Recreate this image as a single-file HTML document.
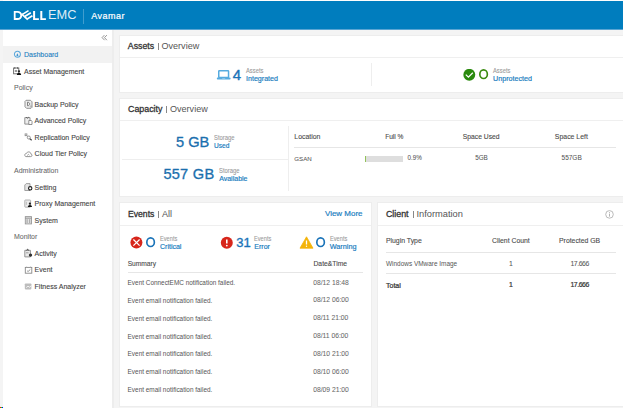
<!DOCTYPE html>
<html><head><meta charset="utf-8"><style>
html,body{margin:0;padding:0;}
body{width:623px;height:408px;overflow:hidden;position:relative;background:#f4f4f4;font-family:"Liberation Sans", sans-serif;}
body div{white-space:nowrap;}
</style></head><body>
<div style="position:absolute;left:3px;top:0px;width:620px;height:1px;background:#fdfdfd"></div>
<div style="position:absolute;left:0px;top:1px;width:623px;height:28px;background:#007dbe"></div>
<div style="position:absolute;left:0px;top:29px;width:623px;height:1px;background:#5aa5d3"></div>
<div style="position:absolute;left:0px;top:30px;width:3px;height:378px;background:#f4f4f4"></div>
<div style="position:absolute;left:3px;top:30px;width:109px;height:378px;background:#fff"></div>
<div style="position:absolute;left:112px;top:30px;width:2px;height:378px;background:#ededed"></div>
<div style="position:absolute;left:3px;top:46px;width:109px;height:17px;background:#f2f2f2"></div>
<svg style="position:absolute;left:0;top:0" width="80" height="30" viewBox="0 0 80 30">
<path fill="#fff" fill-rule="evenodd" d="M13.8 10.9h3.5c3 0 4.9 1.8 4.9 4.5s-1.9 4.5-4.9 4.5H13.8z M15.6 12.7v5.4h1.7c1.9 0 3-1.1 3-2.7s-1.1-2.7-3-2.7z"/>
<g stroke="#fff" stroke-width="1.7" fill="none" stroke-linecap="butt">
<path d="M21.4 13.9 L27.8 19.7"/>
<path d="M22.0 14.6 L28.5 10.6"/>
<path d="M24.7 16.4 L30.8 12.7"/>
<path d="M27.3 18.9 L32.4 15.7"/>
</g>
<path fill="#fff" d="M33.1 10.9h2v7.4h3.8v1.7h-5.8z M40.3 10.9h2v7.4h3.6v1.7h-5.6z"/>
</svg>
<div style="position:absolute;left:48px;top:9.45px;font-size:12.8px;line-height:12.8px;font-weight:400;color:rgba(255,255,255,0.88);letter-spacing:0px;">EMC</div>
<div style="position:absolute;left:83px;top:9px;width:1px;height:15px;background:rgba(255,255,255,0.25)"></div>
<div style="position:absolute;left:91.2px;top:11.96px;font-size:9px;line-height:9px;font-weight:400;color:#fff;letter-spacing:0.5px;-webkit-text-stroke:0.2px #fff;">Avamar</div>
<svg style="position:absolute;left:0;top:0" width="623" height="60" viewBox="0 0 623 60"><path d="M104.4 35.1 L102.1 37.6 L104.6 40.2 M106.9 35.1 L104.5 37.6 L106.9 40.2" fill="none" stroke="#8a8a8a" stroke-width="0.9"/></svg>
<div style="position:absolute;left:24px;top:51.18px;font-size:7px;line-height:7px;font-weight:400;color:#1a7dc0;letter-spacing:0px;-webkit-text-stroke:0.1px #1a7dc0;">Dashboard</div>
<svg style="position:absolute;left:12px;top:49px" width="11" height="11" viewBox="0 0 11 11"><g transform="translate(1.40 1.25)"><circle cx="4" cy="4" r="3" fill="none" stroke="#5aa8dc" stroke-width="1.05"/><path d="M4 3.1L4.85 4.7A0.9 0.9 0 1 1 3.15 4.7z" fill="#3d93d0"/></g></svg>
<div style="position:absolute;left:24px;top:67.73px;font-size:7px;line-height:7px;font-weight:400;color:#444;letter-spacing:0px;-webkit-text-stroke:0.1px #444;">Asset Management</div>
<svg style="position:absolute;left:12px;top:66px" width="11" height="11" viewBox="0 0 11 11"><g transform="translate(1.00 1.00)"><rect x="0.6" y="1" width="5.2" height="5.8" fill="none" stroke="#666" stroke-width="0.9"/><path d="M1.8 0.3v1.4M4.6 0.3v1.4" stroke="#333" stroke-width="0.8"/><path d="M1.8 4h2.4" stroke="#333" stroke-width="1"/><circle cx="6" cy="4.3" r="1.1" fill="#222"/><path d="M3.9 7.9c0-1.4 1-2.2 2.1-2.2s2.1 .8 2.1 2.2z" fill="#111"/></g></svg>
<div style="position:absolute;left:14px;top:84.28px;font-size:7px;line-height:7px;font-weight:400;color:#666;letter-spacing:0px;-webkit-text-stroke:0.05px #666;">Policy</div>
<div style="position:absolute;left:34.6px;top:100.83px;font-size:7px;line-height:7px;font-weight:400;color:#444;letter-spacing:0px;-webkit-text-stroke:0.1px #444;">Backup Policy</div>
<svg style="position:absolute;left:23px;top:98px" width="11" height="11" viewBox="0 0 11 11"><g transform="translate(1.50 1.80)"><path d="M1.5 0.5h4.5l1.5 1.5v5.5l-1 1h-4.5l-1.5-1.5v-5.5z" fill="#eee" stroke="#888" stroke-width="0.9"/><path d="M3 2.4v3.6c1.3 0 2.2-.7 2.2-1.8s-.9-1.8-2.2-1.8z" fill="none" stroke="#666" stroke-width="0.8"/><circle cx="6.4" cy="6.6" r="0.7" fill="#fff" stroke="#777" stroke-width="0.5"/></g></svg>
<div style="position:absolute;left:34.6px;top:117.38px;font-size:7px;line-height:7px;font-weight:400;color:#444;letter-spacing:0px;-webkit-text-stroke:0.1px #444;">Advanced Policy</div>
<svg style="position:absolute;left:23px;top:115px" width="11" height="11" viewBox="0 0 11 11"><g transform="translate(1.00 1.30)"><path d="M0.8 1.3h5.2v6.5h-5.2z" fill="#eee" stroke="#888" stroke-width="0.9"/><path d="M2 0.8l1.4 1.2 1.4-1.2" fill="none" stroke="#555" stroke-width="0.8"/><path d="M4.8 4.2h2.6l0.6 0.8v3.2h-3.2z" fill="#fff" stroke="#777" stroke-width="0.8"/></g></svg>
<div style="position:absolute;left:34.6px;top:133.93px;font-size:7px;line-height:7px;font-weight:400;color:#444;letter-spacing:0px;-webkit-text-stroke:0.1px #444;">Replication Policy</div>
<svg style="position:absolute;left:23px;top:132px" width="11" height="11" viewBox="0 0 11 11"><g transform="translate(1.50 1.30)"><rect x="0.6" y="0.6" width="1.8" height="1.8" fill="none" stroke="#888" stroke-width="0.8"/><path d="M2.2 2.2l1.2 1.2" stroke="#999" stroke-width="0.8"/><circle cx="4.3" cy="4.2" r="1.5" fill="none" stroke="#888" stroke-width="0.9"/><path d="M5.3 5.4l1.9 1.6" stroke="#444" stroke-width="1.2"/></g></svg>
<div style="position:absolute;left:34.6px;top:150.48px;font-size:7px;line-height:7px;font-weight:400;color:#444;letter-spacing:0px;-webkit-text-stroke:0.1px #444;">Cloud Tier Policy</div>
<svg style="position:absolute;left:23px;top:149px" width="11" height="11" viewBox="0 0 11 11"><g transform="translate(1.00 1.30)"><path d="M1.8 6.3h4.9c.9 0 1.3-.6 1.3-1.3s-.5-1.2-1.1-1.2c0-1.3-1-2.2-2.3-2.2-1 0-1.8.6-2.1 1.5-.9 0-1.7.6-1.7 1.6s.6 1.6 1 1.6z" fill="none" stroke="#888" stroke-width="0.9"/><path d="M3.2 5.2l1.2-1.1 1 .8" fill="none" stroke="#777" stroke-width="0.7"/></g></svg>
<div style="position:absolute;left:14px;top:167.03px;font-size:7px;line-height:7px;font-weight:400;color:#666;letter-spacing:0px;-webkit-text-stroke:0.05px #666;">Administration</div>
<div style="position:absolute;left:34.6px;top:183.58px;font-size:7px;line-height:7px;font-weight:400;color:#444;letter-spacing:0px;-webkit-text-stroke:0.1px #444;">Setting</div>
<svg style="position:absolute;left:23px;top:182px" width="11" height="11" viewBox="0 0 11 11"><g transform="translate(1.20 1.00)"><path d="M2 0.6h3.8v6.9h-5.2v-5.5z" fill="#e6e6e6" stroke="#999" stroke-width="0.9"/><circle cx="6" cy="5.3" r="1.7" fill="#fff" stroke="#222" stroke-width="1.1"/></g></svg>
<div style="position:absolute;left:34.6px;top:200.13px;font-size:7px;line-height:7px;font-weight:400;color:#444;letter-spacing:0px;-webkit-text-stroke:0.1px #444;">Proxy Management</div>
<svg style="position:absolute;left:23px;top:198px" width="11" height="11" viewBox="0 0 11 11"><g transform="translate(1.20 1.30)"><rect x="0.6" y="0.7" width="5.8" height="7.2" rx="0.6" fill="#ececec" stroke="#aaa" stroke-width="0.9"/><path d="M2.2 2.5v3" stroke="#aaa" stroke-width="0.7"/><circle cx="5.7" cy="4.4" r="1.1" fill="#222"/><path d="M3.6 7.8c0-1.4 1-2.2 2.1-2.2s2.1 .8 2.1 2.2z" fill="#111"/></g></svg>
<div style="position:absolute;left:34.6px;top:216.68px;font-size:7px;line-height:7px;font-weight:400;color:#444;letter-spacing:0px;-webkit-text-stroke:0.1px #444;">System</div>
<svg style="position:absolute;left:23px;top:215px" width="11" height="11" viewBox="0 0 11 11"><g transform="translate(1.50 1.00)"><rect x="0.8" y="0.6" width="6.2" height="7.3" fill="#e3e3e3" stroke="#999" stroke-width="0.9"/><path d="M0.8 2.2h6.2" stroke="#888" stroke-width="0.8"/><path d="M2.6 3.2v3.8M5.2 3.2v3.8" stroke="#999" stroke-width="0.9"/></g></svg>
<div style="position:absolute;left:14px;top:233.23px;font-size:7px;line-height:7px;font-weight:400;color:#666;letter-spacing:0px;-webkit-text-stroke:0.05px #666;">Monitor</div>
<div style="position:absolute;left:34.6px;top:249.78px;font-size:7px;line-height:7px;font-weight:400;color:#444;letter-spacing:0px;-webkit-text-stroke:0.1px #444;">Activity</div>
<svg style="position:absolute;left:23px;top:248px" width="11" height="11" viewBox="0 0 11 11"><g transform="translate(1.20 1.00)"><path d="M0.6 1.3h5.6v6.6h-5.6z" fill="#eaeaea" stroke="#888" stroke-width="0.9"/><path d="M2.2 1.3l1.2-1 1.2 1" fill="#444" stroke="#444" stroke-width="0.8"/><path d="M1.8 3.8h2.6" stroke="#888" stroke-width="0.8"/><circle cx="6.3" cy="6.1" r="1.7" fill="#333"/></g></svg>
<div style="position:absolute;left:34.6px;top:266.33px;font-size:7px;line-height:7px;font-weight:400;color:#444;letter-spacing:0px;-webkit-text-stroke:0.1px #444;">Event</div>
<svg style="position:absolute;left:23px;top:265px" width="11" height="11" viewBox="0 0 11 11"><g transform="translate(1.60 1.00)"><rect x="0.7" y="1.4" width="6.5" height="5.8" fill="none" stroke="#888" stroke-width="0.9"/><path d="M2 0.5v1.2M5.9 0.5v1.2" stroke="#aaa" stroke-width="0.7"/><path d="M2.5 4.8l1 .7 2.2-2" fill="none" stroke="#777" stroke-width="0.8"/></g></svg>
<div style="position:absolute;left:34.6px;top:282.88px;font-size:7px;line-height:7px;font-weight:400;color:#444;letter-spacing:0px;-webkit-text-stroke:0.1px #444;">Fitness Analyzer</div>
<svg style="position:absolute;left:23px;top:281px" width="11" height="11" viewBox="0 0 11 11"><g transform="translate(1.40 1.80)"><rect x="0.4" y="0.6" width="6.6" height="6" rx="0.8" fill="#bdbdbd"/><path d="M1.8 4.8l1.8-1.4 1.6 1 1.6-1.4" fill="none" stroke="#fff" stroke-width="0.8"/></g></svg>
<div style="position:absolute;left:119px;top:35px;width:506px;height:58px;background:#fff;border:1px solid #ededed;box-sizing:border-box"></div>
<div style="position:absolute;left:120px;top:57px;width:504px;height:1px;background:#efefef"></div>
<div style="position:absolute;left:127.8px;top:41.59px;font-size:8.8px;line-height:8.8px;font-weight:400;color:#333;letter-spacing:0px;-webkit-text-stroke:0.3px #333;">Assets</div>
<div style="position:absolute;left:157.8px;top:43px;width:0.9px;height:6.5px;background:#888"></div>
<div style="position:absolute;left:161.5px;top:41.55px;font-size:9.05px;line-height:9.05px;font-weight:400;color:#555;letter-spacing:0px;">Overview</div>
<div style="position:absolute;left:119px;top:98px;width:506px;height:99px;background:#fff;border:1px solid #ededed;box-sizing:border-box"></div>
<div style="position:absolute;left:120px;top:120px;width:504px;height:1px;background:#efefef"></div>
<div style="position:absolute;left:128px;top:104.58px;font-size:8.85px;line-height:8.85px;font-weight:400;color:#333;letter-spacing:0px;-webkit-text-stroke:0.3px #333;">Capacity</div>
<div style="position:absolute;left:166.3px;top:106px;width:0.9px;height:6.5px;background:#888"></div>
<div style="position:absolute;left:170px;top:104.55px;font-size:9.05px;line-height:9.05px;font-weight:400;color:#555;letter-spacing:0px;">Overview</div>
<div style="position:absolute;left:119px;top:202px;width:253px;height:205px;background:#fff;border:1px solid #ededed;box-sizing:border-box"></div>
<div style="position:absolute;left:120px;top:225px;width:251px;height:1px;background:#efefef"></div>
<div style="position:absolute;left:128px;top:209.62px;font-size:8.65px;line-height:8.65px;font-weight:400;color:#333;letter-spacing:0px;-webkit-text-stroke:0.3px #333;">Events</div>
<div style="position:absolute;left:158px;top:211px;width:0.9px;height:6.5px;background:#888"></div>
<div style="position:absolute;left:162px;top:209.56px;font-size:9px;line-height:9px;font-weight:400;color:#555;letter-spacing:0px;">All</div>
<div style="position:absolute;left:377px;top:202px;width:248px;height:205px;background:#fff;border:1px solid #ededed;box-sizing:border-box"></div>
<div style="position:absolute;left:378px;top:225px;width:246px;height:1px;background:#efefef"></div>
<div style="position:absolute;left:385.9px;top:209.58px;font-size:8.9px;line-height:8.9px;font-weight:400;color:#333;letter-spacing:0px;-webkit-text-stroke:0.3px #333;">Client</div>
<div style="position:absolute;left:412.5px;top:211px;width:0.9px;height:6.5px;background:#888"></div>
<div style="position:absolute;left:416.4px;top:209.51px;font-size:9.3px;line-height:9.3px;font-weight:400;color:#555;letter-spacing:0px;">Information</div>
<svg style="position:absolute;left:216px;top:69px" width="15" height="12" viewBox="0 0 15 12"><rect x="2.75" y="1.75" width="9.8" height="6.8" rx="0.6" fill="none" stroke="#56abdf" stroke-width="1.5"/><path d="M1.7 8.6h12a0.9 0.9 0 0 1 0 1.8h-12a0.9 0.9 0 0 1 0-1.8z" fill="#56abdf"/><path d="M6.2 9.5h3" stroke="#a9d3ee" stroke-width="0.6"/></svg>
<div style="position:absolute;left:232.8px;top:67.20px;font-size:15px;line-height:15px;font-weight:400;color:#1a73b8;letter-spacing:0px;-webkit-text-stroke:0.4px #1a73b8;">4</div>
<div style="position:absolute;left:246px;top:68.49px;font-size:6.3px;line-height:6.3px;font-weight:400;color:#999;letter-spacing:0px;-webkit-text-stroke:0.08px #999;transform:scaleX(0.92);transform-origin:0 0;">Assets</div>
<div style="position:absolute;left:246px;top:75.66px;font-size:7.1px;line-height:7.1px;font-weight:400;color:#1a7dc0;letter-spacing:0px;-webkit-text-stroke:0.18px #1a7dc0;">Integrated</div>
<div style="position:absolute;left:371px;top:63px;width:1px;height:23px;background:#eee"></div>
<svg style="position:absolute;left:463px;top:69px" width="13" height="13" viewBox="0 0 13 13"><circle cx="6.3" cy="5.8" r="5.95" fill="#2a8a0e"/><path d="M2.8 5.6l2.6 2.5 4.4-4.3" fill="none" stroke="#fff" stroke-width="1.3"/></svg>
<svg style="position:absolute;left:477.95px;top:68.44999999999999px" width="11.2" height="12.3" viewBox="477.95 68.44999999999999 11.2 12.3"><ellipse cx="483.55" cy="74.6" rx="3.7749999999999995" ry="4.325" fill="none" stroke="#3a8a10" stroke-width="1.65"/></svg>
<div style="position:absolute;left:493px;top:68.49px;font-size:6.3px;line-height:6.3px;font-weight:400;color:#999;letter-spacing:0px;-webkit-text-stroke:0.08px #999;transform:scaleX(0.92);transform-origin:0 0;">Assets</div>
<div style="position:absolute;left:493px;top:75.65px;font-size:7.18px;line-height:7.18px;font-weight:400;color:#1a7dc0;letter-spacing:0px;-webkit-text-stroke:0.18px #1a7dc0;">Unprotected</div>
<div style="position:absolute;left:176px;top:134.96px;font-size:14.6px;line-height:14.6px;font-weight:400;color:#1a6fae;letter-spacing:0px;-webkit-text-stroke:0.32px #1a6fae;">5 GB</div>
<div style="position:absolute;left:214px;top:134.69px;font-size:6.3px;line-height:6.3px;font-weight:400;color:#999;letter-spacing:0px;-webkit-text-stroke:0.08px #999;transform:scaleX(0.93);transform-origin:0 0;">Storage</div>
<div style="position:absolute;left:214px;top:143.04px;font-size:6.6px;line-height:6.6px;font-weight:400;color:#1a7dc0;letter-spacing:0px;-webkit-text-stroke:0.18px #1a7dc0;">Used</div>
<div style="position:absolute;left:122px;top:159px;width:166px;height:1px;background:#eee"></div>
<div style="position:absolute;left:163.4px;top:166.96px;font-size:14.6px;line-height:14.6px;font-weight:400;color:#1a6fae;letter-spacing:0.25px;-webkit-text-stroke:0.32px #1a6fae;">557 GB</div>
<div style="position:absolute;left:219.2px;top:167.79px;font-size:6.3px;line-height:6.3px;font-weight:400;color:#999;letter-spacing:0px;-webkit-text-stroke:0.08px #999;transform:scaleX(0.93);transform-origin:0 0;">Storage</div>
<div style="position:absolute;left:219.2px;top:175.48px;font-size:7.0px;line-height:7.0px;font-weight:400;color:#1a7dc0;letter-spacing:0px;-webkit-text-stroke:0.18px #1a7dc0;">Available</div>
<div style="position:absolute;left:288px;top:126px;width:1px;height:65px;background:#eee"></div>
<div style="position:absolute;left:294.3px;top:133.60px;font-size:6.9px;line-height:6.9px;font-weight:400;color:#4a4a4a;letter-spacing:0px;-webkit-text-stroke:0.1px #4a4a4a;">Location</div>
<div style="position:absolute;left:394.3px;top:133.64px;font-size:6.6px;line-height:6.6px;font-weight:400;color:#4a4a4a;letter-spacing:0px;-webkit-text-stroke:0.1px #4a4a4a;transform:translateX(-50%);">Full %</div>
<div style="position:absolute;left:481.2px;top:133.62px;font-size:6.75px;line-height:6.75px;font-weight:400;color:#4a4a4a;letter-spacing:0px;-webkit-text-stroke:0.1px #4a4a4a;transform:translateX(-50%);">Space Used</div>
<div style="position:absolute;left:571.35px;top:133.60px;font-size:6.9px;line-height:6.9px;font-weight:400;color:#4a4a4a;letter-spacing:0px;-webkit-text-stroke:0.1px #4a4a4a;transform:translateX(-50%);">Space Left</div>
<div style="position:absolute;left:294px;top:147px;width:322px;height:1px;background:#e6e6e6"></div>
<div style="position:absolute;left:294.3px;top:155.51px;font-size:6.2px;line-height:6.2px;font-weight:400;color:#555;letter-spacing:0px;-webkit-text-stroke:0.05px #555;">GSAN</div>
<div style="position:absolute;left:364.6px;top:156px;width:38.2px;height:5.8px;background:#dedede"></div>
<div style="position:absolute;left:364.6px;top:156px;width:1.3px;height:5.8px;background:#93c35a"></div>
<div style="position:absolute;left:407.6px;top:155.49px;font-size:6.3px;line-height:6.3px;font-weight:400;color:#555;letter-spacing:0px;-webkit-text-stroke:0.05px #555;">0.9%</div>
<div style="position:absolute;left:481.45px;top:155.49px;font-size:6.3px;line-height:6.3px;font-weight:400;color:#555;letter-spacing:0px;-webkit-text-stroke:0.05px #555;transform:translateX(-50%);">5GB</div>
<div style="position:absolute;left:571.65px;top:155.46px;font-size:6.5px;line-height:6.5px;font-weight:400;color:#555;letter-spacing:0px;-webkit-text-stroke:0.05px #555;transform:translateX(-50%);">557GB</div>
<div style="position:absolute;left:325px;top:209.72px;font-size:7.97px;line-height:7.97px;font-weight:400;color:#1a7dc0;letter-spacing:0px;-webkit-text-stroke:0.18px #1a7dc0;">View More</div>
<svg style="position:absolute;left:130px;top:236px" width="13" height="13" viewBox="0 0 13 13"><circle cx="6.4" cy="6.6" r="6" fill="#d7261b"/><path d="M3.4 3.5l6.2 6.1M9.6 3.5L3.4 9.6" fill="none" stroke="#fff" stroke-width="1.25"/></svg>
<svg style="position:absolute;left:144.95000000000002px;top:235.85px" width="11.2" height="12.3" viewBox="144.95000000000002 235.85 11.2 12.3"><ellipse cx="150.55" cy="242.0" rx="3.7749999999999995" ry="4.325" fill="none" stroke="#1a73b8" stroke-width="1.65"/></svg>
<div style="position:absolute;left:160px;top:236.16px;font-size:6.5px;line-height:6.5px;font-weight:400;color:#999;letter-spacing:0px;-webkit-text-stroke:0.08px #999;transform:scaleX(0.87);transform-origin:0 0;">Events</div>
<div style="position:absolute;left:160px;top:242.88px;font-size:7.0px;line-height:7.0px;font-weight:400;color:#1a7dc0;letter-spacing:0px;-webkit-text-stroke:0.18px #1a7dc0;">Critical</div>
<svg style="position:absolute;left:220px;top:236px" width="13" height="13" viewBox="0 0 13 13"><circle cx="6.8" cy="6.7" r="6" fill="#d7261b"/><path d="M6.8 3.4v4.2" stroke="#fff" stroke-width="1.6"/><circle cx="6.8" cy="9.6" r="0.9" fill="#fff"/></svg>
<div style="position:absolute;left:236.2px;top:235.52px;font-size:13px;line-height:13px;font-weight:400;color:#1a73b8;letter-spacing:0px;-webkit-text-stroke:0.35px #1a73b8;">31</div>
<div style="position:absolute;left:254.3px;top:236.16px;font-size:6.5px;line-height:6.5px;font-weight:400;color:#999;letter-spacing:0px;-webkit-text-stroke:0.08px #999;transform:scaleX(0.87);transform-origin:0 0;">Events</div>
<div style="position:absolute;left:254.3px;top:242.87px;font-size:7.06px;line-height:7.06px;font-weight:400;color:#1a7dc0;letter-spacing:0px;-webkit-text-stroke:0.18px #1a7dc0;">Error</div>
<svg style="position:absolute;left:299px;top:236px" width="15" height="13" viewBox="0 0 15 13"><path d="M7.5 0.8L14 12.2H1z" fill="#f4b40a" stroke="#f4b40a" stroke-width="0.8" stroke-linejoin="round"/><path d="M7.5 4.5v4" stroke="#fff" stroke-width="1.3"/><circle cx="7.5" cy="10.3" r="0.7" fill="#fff"/></svg>
<svg style="position:absolute;left:315.29999999999995px;top:235.85px" width="11.2" height="12.3" viewBox="315.29999999999995 235.85 11.2 12.3"><ellipse cx="320.9" cy="242.0" rx="3.7749999999999995" ry="4.325" fill="none" stroke="#1a73b8" stroke-width="1.65"/></svg>
<div style="position:absolute;left:329.7px;top:236.16px;font-size:6.5px;line-height:6.5px;font-weight:400;color:#999;letter-spacing:0px;-webkit-text-stroke:0.08px #999;transform:scaleX(0.87);transform-origin:0 0;">Events</div>
<div style="position:absolute;left:329.7px;top:242.84px;font-size:7.27px;line-height:7.27px;font-weight:400;color:#1a7dc0;letter-spacing:0px;-webkit-text-stroke:0.18px #1a7dc0;">Warning</div>
<div style="position:absolute;left:127.7px;top:260.54px;font-size:6.65px;line-height:6.65px;font-weight:400;color:#4a4a4a;letter-spacing:0px;-webkit-text-stroke:0.1px #4a4a4a;">Summary</div>
<div style="position:absolute;left:313.5px;top:260.52px;font-size:6.75px;line-height:6.75px;font-weight:400;color:#4a4a4a;letter-spacing:0px;-webkit-text-stroke:0.1px #4a4a4a;">Date&amp;Time</div>
<div style="position:absolute;left:127.7px;top:272px;width:235px;height:1px;background:#e6e6e6"></div>
<div style="position:absolute;left:127.6px;top:279.97px;font-size:6.42px;line-height:6.42px;font-weight:400;color:#555;letter-spacing:0px;">Event ConnectEMC notification failed.</div>
<div style="position:absolute;left:313.2px;top:279.52px;font-size:6.75px;line-height:6.75px;font-weight:400;color:#666;letter-spacing:0px;-webkit-text-stroke:0.04px #666;">08/12 18:48</div>
<div style="position:absolute;left:127.6px;top:297.84px;font-size:6.42px;line-height:6.42px;font-weight:400;color:#555;letter-spacing:0px;">Event email notification failed.</div>
<div style="position:absolute;left:313.2px;top:297.39px;font-size:6.75px;line-height:6.75px;font-weight:400;color:#666;letter-spacing:0px;-webkit-text-stroke:0.04px #666;">08/12 06:00</div>
<div style="position:absolute;left:127.6px;top:315.71px;font-size:6.42px;line-height:6.42px;font-weight:400;color:#555;letter-spacing:0px;">Event email notification failed.</div>
<div style="position:absolute;left:313.2px;top:315.26px;font-size:6.75px;line-height:6.75px;font-weight:400;color:#666;letter-spacing:0px;-webkit-text-stroke:0.04px #666;">08/11 21:00</div>
<div style="position:absolute;left:127.6px;top:333.58px;font-size:6.42px;line-height:6.42px;font-weight:400;color:#555;letter-spacing:0px;">Event email notification failed.</div>
<div style="position:absolute;left:313.2px;top:333.13px;font-size:6.75px;line-height:6.75px;font-weight:400;color:#666;letter-spacing:0px;-webkit-text-stroke:0.04px #666;">08/11 06:00</div>
<div style="position:absolute;left:127.6px;top:351.45px;font-size:6.42px;line-height:6.42px;font-weight:400;color:#555;letter-spacing:0px;">Event email notification failed.</div>
<div style="position:absolute;left:313.2px;top:351.00px;font-size:6.75px;line-height:6.75px;font-weight:400;color:#666;letter-spacing:0px;-webkit-text-stroke:0.04px #666;">08/10 21:00</div>
<div style="position:absolute;left:127.6px;top:369.32px;font-size:6.42px;line-height:6.42px;font-weight:400;color:#555;letter-spacing:0px;">Event email notification failed.</div>
<div style="position:absolute;left:313.2px;top:368.87px;font-size:6.75px;line-height:6.75px;font-weight:400;color:#666;letter-spacing:0px;-webkit-text-stroke:0.04px #666;">08/10 06:00</div>
<div style="position:absolute;left:127.6px;top:387.19px;font-size:6.42px;line-height:6.42px;font-weight:400;color:#555;letter-spacing:0px;">Event email notification failed.</div>
<div style="position:absolute;left:313.2px;top:386.74px;font-size:6.75px;line-height:6.75px;font-weight:400;color:#666;letter-spacing:0px;-webkit-text-stroke:0.04px #666;">08/09 21:00</div>
<svg style="position:absolute;left:605px;top:210px" width="9" height="9" viewBox="0 0 9 9"><circle cx="4.5" cy="4.4" r="3.8" fill="none" stroke="#aaa" stroke-width="0.8"/><path d="M4.5 3.6v3" stroke="#aaa" stroke-width="0.9"/><circle cx="4.5" cy="2.4" r="0.5" fill="#aaa"/></svg>
<div style="position:absolute;left:385.9px;top:237.90px;font-size:6.9px;line-height:6.9px;font-weight:400;color:#4a4a4a;letter-spacing:0px;-webkit-text-stroke:0.1px #4a4a4a;">Plugin Type</div>
<div style="position:absolute;left:510.9px;top:237.90px;font-size:6.85px;line-height:6.85px;font-weight:400;color:#4a4a4a;letter-spacing:0px;-webkit-text-stroke:0.1px #4a4a4a;transform:translateX(-50%);">Client Count</div>
<div style="position:absolute;left:579.6px;top:237.90px;font-size:6.85px;line-height:6.85px;font-weight:400;color:#4a4a4a;letter-spacing:0px;-webkit-text-stroke:0.1px #4a4a4a;transform:translateX(-50%);">Protected GB</div>
<div style="position:absolute;left:386px;top:252px;width:229.5px;height:1px;background:#e6e6e6"></div>
<div style="position:absolute;left:386px;top:260.77px;font-size:6.45px;line-height:6.45px;font-weight:400;color:#555;letter-spacing:0px;">Windows VMware Image</div>
<div style="position:absolute;left:511px;top:260.60px;font-size:6.9px;line-height:6.9px;font-weight:400;color:#555;letter-spacing:0px;-webkit-text-stroke:0.05px #555;transform:translateX(-50%);">1</div>
<div style="position:absolute;left:579.7px;top:260.60px;font-size:6.9px;line-height:6.9px;font-weight:400;color:#555;letter-spacing:-0.45px;-webkit-text-stroke:0.05px #555;transform:translateX(-50%);">17.666</div>
<div style="position:absolute;left:386px;top:273px;width:229.5px;height:1px;background:#e6e6e6"></div>
<div style="position:absolute;left:386px;top:281.68px;font-size:7.0px;line-height:7.0px;font-weight:400;color:#333;letter-spacing:0px;-webkit-text-stroke:0.22px #333;">Total</div>
<div style="position:absolute;left:511px;top:282.10px;font-size:6.9px;line-height:6.9px;font-weight:400;color:#333;letter-spacing:0px;-webkit-text-stroke:0.2px #333;transform:translateX(-50%);">1</div>
<div style="position:absolute;left:579.7px;top:282.10px;font-size:6.9px;line-height:6.9px;font-weight:400;color:#333;letter-spacing:-0.45px;-webkit-text-stroke:0.2px #333;transform:translateX(-50%);">17.666</div>
<div style="position:absolute;left:0px;top:407px;width:1px;height:1px;background:#f00"></div>
<div style="position:absolute;left:1px;top:407px;width:1px;height:1px;background:#0f0"></div>
<div style="position:absolute;left:2px;top:407px;width:1px;height:1px;background:#00f"></div>
</body></html>
